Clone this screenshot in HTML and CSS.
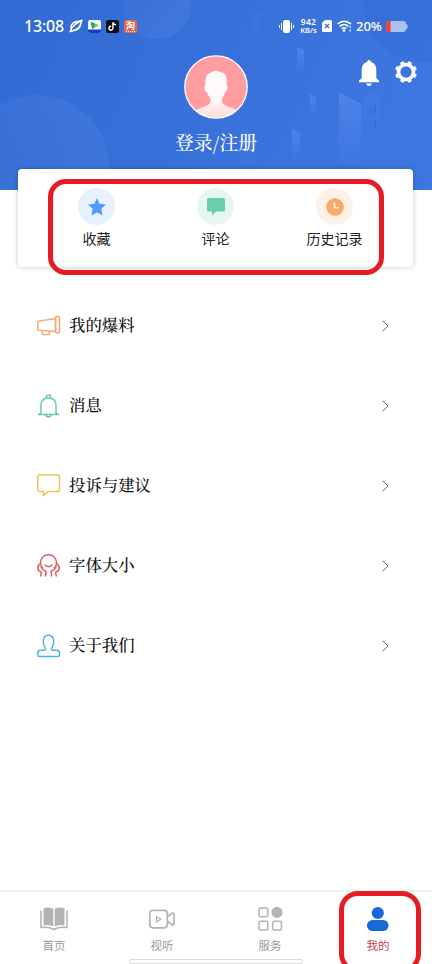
FILE: index.html
```
<!DOCTYPE html>
<html lang="zh-CN">
<head>
<meta charset="utf-8">
<title>我的</title>
<link rel="stylesheet" href="styles.css">
</head>
<body>
<div class="app">
  <header class="hero">
    <svg class="hero-art" viewBox="0 0 432 190">
      <defs>
        <linearGradient id="sky" x2="1" y2=".2"><stop stop-color="#326ad3"/><stop offset="1" stop-color="#3d76df"/></linearGradient>
        <linearGradient id="orb" x1="0" y1="1" x2="1" y2="0"><stop stop-color="#5b91ed" stop-opacity="0"/><stop offset="1" stop-color="#5b91ed" stop-opacity=".25"/></linearGradient>
        <linearGradient id="orb2" x2="1" y2="1"><stop stop-color="#5b91ed" stop-opacity="0"/><stop offset="1" stop-color="#5b91ed" stop-opacity=".32"/></linearGradient>
        <linearGradient id="tower" x2="0" y2="1"><stop stop-color="#5e92f4" stop-opacity=".55"/><stop offset="1" stop-color="#5e92f4" stop-opacity="0"/></linearGradient>
      </defs>
      <rect width="432" height="190" fill="url(#sky)"/>
      <circle cx="37" cy="167" r="72" fill="url(#orb)"/>
      <circle cx="157" cy="5" r="34" fill="url(#orb2)"/>
      <circle cx="424" cy="1" r="61" fill="#2861c9" opacity=".22"/>
      <g fill="url(#tower)">
        <path d="M339 92L361 104V165H339Z"/><path d="M361 104L371 91 380 95V150H361Z" opacity=".25"/>
        <path d="M292 128L300 133V159H292Z"/><path d="M297 47L304 50V74H297Z"/><path d="M310 94L316 97V118H310Z"/>
        <path d="M240 133L248 129 255 133V170H240Z" opacity=".3"/><path d="M253 13H260V42H253Z" opacity=".25"/>
      </g>
      <path d="M370 107v9m5-11v9m-5 8v9m5-11v9" stroke="#2861c9" opacity=".5"/>
    </svg>

    <div class="status">
      <div class="status-left">
        <span class="time">13:08</span>
        <svg width="14" height="14" viewBox="0 0 14 14" fill="none" stroke="#fff" stroke-width="1.5"><path d="M1.700 9Q2.500 2.500 9.500 2.200L12.800 1.500 11.700 5Q11 10.800 5 11.500L1.300 12.500 2.500 9.500Q6.500 4 12.800 1.500M4.500 11.500Q10 10 11.700 5"/></svg>
        <svg width="13" height="13" viewBox="0 0 13 13"><rect width="13" height="13" rx="2" fill="#f5faff"/><path d="M3 2L10.500 5.200 4 9Z" fill="#20ad63"/><path d="M3 2L7 3.800 3.500 6Z" fill="#1691e5"/><path d="M7 3.800L10.500 5.200 6 8Z" fill="#8bc34a"/><path d="M0 9.500H13V11Q13 13 11 13H2Q0 13 0 11Z" fill="#1739c4"/></svg>
        <svg width="13" height="13" viewBox="0 0 13 13"><rect width="13" height="13" rx="2.500" fill="#080b18"/><path d="M6.900 2.300V8.100A2 2 0 1 1 5.200 6.200M6.900 2.400Q7.500 4.700 10 4.800" stroke="#fff" stroke-width="1.400" fill="none"/></svg>
        <span class="shop"><b>淘</b><i></i></span>
      </div>
      <div class="status-right">
        <svg width="15" height="13" viewBox="0 0 15 13" fill="#fff"><rect x="4" width="7" height="13" rx="2"/><path d="M2 3h1v7H2zM0 5h1v3H0zM12 3h1v7h-1zM14 5h1v3h-1z"/></svg>
        <span class="rate"><b>942</b><b>KB/s</b></span>
        <svg class="sim" width="10" height="12" viewBox="0 0 10 12"><path d="M3 0H8.500Q10 0 10 1.500V10.500Q10 12 8.500 12H1.500Q0 12 0 10.500V3Z" fill="#fff"/><path d="M3 4L7 8M7 4L3 8" stroke="#3971da" stroke-width="1.300"/></svg>
        <svg class="wifi" width="15" height="12" viewBox="0 0 15 12" fill="none" stroke="#fff" stroke-width="1.600"><path d="M.5 4Q7-1.500 14 4M2.600 6.300Q7 2.700 11.400 6.300M4.600 8.600Q7 6.800 9.400 8.600"/><circle cx="7" cy="10.600" r=".6"/><path d="M13.200 6v2m0 1.500v2" stroke-width="1.200"/></svg>
        <span class="percent">20%</span>
        <svg width="22" height="11" viewBox="0 0 22 11"><rect width="20" height="11" rx="3" fill="#a9c1ee"/><path d="M4.500 0H3Q0 0 0 3V8Q0 11 3 11H4.500Z" fill="#f03e3b"/><rect x="20" y="3" width="1.500" height="5" rx=".7" fill="#a9c1ee"/></svg>
      </div>
    </div>

    <div class="actions">
      <svg width="22" height="27" viewBox="0 0 22 27" fill="#fff"><path d="M11 0Q12.700 0 13 2Q18.300 3.600 18.300 10V17.500Q18.300 19 21 20.500V22.300H1V20.500Q3.700 19 3.700 17.500V10Q3.700 3.600 9 2Q9.300 0 11 0ZM8 23.500H14Q13 26 11 26Q9 26 8 23.500Z"/></svg>
      <svg width="24" height="24" viewBox="-12 -12 24 24"><g fill="#fff"><circle r="9.300"/><rect x="-2" y="-11" width="4" height="22" rx="1" transform="rotate(22.500)"/><rect x="-2" y="-11" width="4" height="22" rx="1" transform="rotate(67.500)"/><rect x="-2" y="-11" width="4" height="22" rx="1" transform="rotate(112.500)"/><rect x="-2" y="-11" width="4" height="22" rx="1" transform="rotate(157.500)"/></g><circle r="5.700" fill="#3d74dd"/></svg>
    </div>

    <div class="profile">
      <svg width="64" height="64" viewBox="0 0 64 64">
        <defs><clipPath id="face"><circle cx="32" cy="32" r="31"/></clipPath><linearGradient id="bust" x2="0" y2="1"><stop offset=".6" stop-color="#fffafa"/><stop offset="1" stop-color="#ffd5d6"/></linearGradient></defs>
        <circle cx="32" cy="32" r="31" fill="#ff9da1"/>
        <path clip-path="url(#face)" d="M27 17.500Q31 14.500 36 17Q42 17.500 42.500 23Q43 26 42.500 30Q44 30 43.300 34Q42.500 37 41 37.500Q40 41 38 43.500V47Q39 50 45 52Q52 54 54 57V64H10V57Q13 54 19 52Q26 50 26.500 47V43.500Q24.500 41 23 37.500Q21 37 20.500 33Q20.300 30 21.500 30Q20 20 27 17.500Z" fill="url(#bust)"/>
        <circle cx="32" cy="32" r="31.200" fill="none" stroke="#fff" stroke-width="1.300"/>
      </svg>
      <span class="login">登录/注册</span>
    </div>
  </header>

  <section class="shortcuts">
    <div class="shortcut"><span class="disc blue"><svg width="18" height="18" viewBox="0 0 18 18"><path d="M9 0L11.600 5.800 18 6.500 13.300 10.800 14.600 17.500 9 14.400 3.400 17.500 4.700 10.800 0 6.500 6.400 5.800Z" fill="#529df7"/></svg></span><span>收藏</span></div>
    <div class="shortcut"><span class="disc green"><svg width="18" height="18" viewBox="0 0 18 18"><path d="M1.500 0H16.500Q18 0 18 1.500V12Q18 13.500 16.500 13.500H9L5 17.500V13.500H1.500Q0 13.500 0 12V1.500Q0 0 1.500 0Z" fill="#68cfaa"/></svg></span><span>评论</span></div>
    <div class="shortcut"><span class="disc orange"><svg width="18" height="18" viewBox="0 0 18 18"><circle cx="9" cy="9" r="8.700" fill="#fca867"/><path d="M8.500 4.500V9.800H13" fill="none" stroke="#fff1e5" stroke-width="1.500"/></svg></span><span>历史记录</span></div>
    <div class="mark mark-top"></div>
  </section>

  <main class="menu">
    <div class="row"><svg class="menu-icon" viewBox="0 0 24 24" stroke="#f5aa76"><path d="M1.500 7.300L18.500 4.500V17.500L1.500 16.200Q.8 16.100.8 15.200V8.300Q.8 7.400 1.500 7.300Z"/><rect x="18.500" y="2.500" width="4" height="16.500" rx="1.500"/><path d="M5.500 16.700V19.500Q5.500 20.500 6.500 20.500H11.500Q12.500 20.500 12.500 19.500V17.200"/></svg><span>我的爆料</span><svg class="arrow" viewBox="0 0 7 12"><path d="M.7.700L6 6 .7 11.300"/></svg></div>
    <div class="row"><svg class="menu-icon" viewBox="0 0 24 24" stroke="#68cca8"><path d="M4 19V11.500Q4 4 11.500 4Q19 4 19 11.500V19M1 20.500Q4 20.500 4 18M22 20.500Q19 20.500 19 18M1 20.500H22M9.500 4V2Q9.500 1.300 10.200 1.300H12.800Q13.500 1.300 13.500 2V4M9 20.500Q9 23 11.500 23Q14 23 14 20.500"/></svg><span>消息</span><svg class="arrow" viewBox="0 0 7 12"><path d="M.7.700L6 6 .7 11.300"/></svg></div>
    <div class="row"><svg class="menu-icon" viewBox="0 0 24 24" stroke="#f3c455"><path d="M2.500 1H20.500Q22.500 1 22.500 3V15.500Q22.500 17.500 20.500 17.500H11L6.500 21.800V17.500H2.500Q.8 17.500.8 15.500V3Q.8 1 2.500 1Z"/></svg><span>投诉与建议</span><svg class="arrow" viewBox="0 0 7 12"><path d="M.7.700L6 6 .7 11.300"/></svg></div>
    <div class="row"><svg class="menu-icon" viewBox="0 0 24 24" stroke="#e45b65"><path d="M6 14.500A8 8 0 1 1 17 14.500M7.800 10.500Q9 12.700 11.500 12.700Q14 12.700 15.200 10.500M3.700 9.500Q.8 11 .8 14Q.8 17 4.200 18.200Q4.500 20 3.500 22.500M3.700 12.500Q5 15.800 8.500 17Q9.700 18 8.500 20V22.500M19.300 9.500Q22.200 11 22.200 14Q22.200 17 18.800 18.200Q18.500 20 19.500 22.500M19.300 12.500Q18 15.800 14.500 17Q13.300 18 14.500 20V22.500"/></svg><span>字体大小</span><svg class="arrow" viewBox="0 0 7 12"><path d="M.7.700L6 6 .7 11.300"/></svg></div>
    <div class="row"><svg class="menu-icon" viewBox="0 0 24 24" stroke="#4fb3ea"><path d="M8.500 14.500Q6.200 11 6.200 7.500Q6.200 1.200 11.500 1.200Q16.800 1.200 16.800 7.500Q16.800 11 14.500 14.500Q14 16.200 17 16.300H20Q22.500 16.500 22.500 19.500V21Q22.500 22.500 21 22.500H2.300Q.8 22.500.8 21V19.500Q.8 16.500 3.200 16.300H6Q9 16.200 8.500 14.500Z"/></svg><span>关于我们</span><svg class="arrow" viewBox="0 0 7 12"><path d="M.7.700L6 6 .7 11.300"/></svg></div>
  </main>

  <nav class="tabs">
    <div class="tab"><svg viewBox="0 0 28 26"><path d="M3.500 2.500Q9 .5 13.300 3V20.500Q9 18 3.500 19.500ZM14.700 3Q19 .5 24.500 2.500V19.500Q19 18 14.700 20.500Z" fill="#b3b3b3"/><path d="M1 4.500V21.500Q9 20.300 14 23.500Q19 20.300 27 21.500V4.500" fill="none" stroke="#b3b3b3" stroke-width="1.500"/></svg><span>首页</span></div>
    <div class="tab"><svg viewBox="0 0 28 26" fill="none" stroke="#b3b3b3" stroke-width="1.700"><rect x="1.800" y="4.300" width="17.500" height="17.500" rx="3"/><path d="M19.500 10.500L24 7.300Q26 6.500 26 8.500V17.500Q26 19.500 24 18.700L19.500 15.500"/><path d="M8.500 10.500L12.800 13.200 8.500 16Z" stroke-width="1.200"/></svg><span>视听</span></div>
    <div class="tab"><svg viewBox="0 0 28 26" fill="none" stroke="#b3b3b3" stroke-width="1.500"><rect x="3" y="2" width="8.800" height="8.800" rx="1.500"/><circle cx="21" cy="6.400" r="4.800" fill="#b3b3b3"/><rect x="3" y="15.200" width="8.800" height="8.800" rx="1.500"/><rect x="16.700" y="15.200" width="8.800" height="8.800" rx="1.500"/></svg><span>服务</span></div>
    <div class="tab active"><svg viewBox="0 0 28 26" fill="#176bd8"><circle cx="13.800" cy="7" r="6.100"/><rect x="3" y="14" width="21.500" height="11" rx="5.500"/></svg><span>我的</span></div>
    <div class="home-bar"></div>
    <div class="mark mark-tab"></div>
  </nav>
</div>
</body>
</html>
```
FILE: styles.css
```
* { box-sizing: border-box; }
body { margin: 0; background: #fff; font-family: "Noto Sans CJK SC", sans-serif; }
svg { display: block; flex: none; }
.app { position: relative; width: 432px; height: 964px; overflow: hidden; display: flex; flex-direction: column; }
.hero { position: relative; height: 190px; flex: none; color: #fff; }
.hero-art { position: absolute; inset: 0; width: 432px; height: 190px; }
.status { position: relative; display: flex; justify-content: space-between; height: 52px; padding: 0 24px; align-items: center; font-family: "Noto Sans", sans-serif; }
.status-left, .status-right { display: flex; align-items: center; }
.status-left { gap: 5px; }
.time { font-size: 16px; line-height: 20px; font-weight: 500; width: 40px; letter-spacing: -.2px; white-space: nowrap; }
.shop { width: 13px; height: 13px; border-radius: 2px; background: #e96543; text-align: center; }
.shop b { display: block; font: 700 9px/11px "Noto Sans CJK SC", sans-serif; }
.shop i { display: block; width: 9px; border-top: 1px dotted #fff; margin: 0 auto; }
.rate { display: flex; flex-direction: column; width: 19px; margin-left: 5px; font-size: 8.500px; line-height: 9px; align-items: center; letter-spacing: .3px; }
.rate b { font-weight: 600; }
.rate b:last-child { font-size: 7.500px; letter-spacing: 0; }
.sim { margin-left: 4px; }
.wifi { margin-left: 5px; }
.percent { margin: 0 3px 0 4px; font-size: 13px; line-height: 20px; font-weight: 500; width: 27px; letter-spacing: 0; }
.actions { position: absolute; right: 14px; top: 60px; display: flex; align-items: center; gap: 14px; }
.actions svg:last-child { margin-top: -3px; }
.profile { position: relative; display: flex; flex-direction: column; align-items: center; margin-top: 3px; }
.login { margin-top: 9px; font: 500 18.800px/28px "Noto Serif CJK SC", "Noto Serif SC", "Noto Sans CJK SC", serif; }
.shortcuts { position: relative; flex: none; width: 395px; height: 98px; margin: -21px 0 0 18px; padding: 19px 19px 0; display: grid; grid-template-columns: repeat(3, 1fr); background: #fff; border-radius: 4px; box-shadow: 0 0 5px rgba(0,0,0,.24); }
.shortcut { display: flex; flex-direction: column; align-items: center; color: #222; font-size: 14px; line-height: 22px; gap: 2px; }
.disc { width: 37px; height: 37px; border-radius: 50%; display: flex; align-items: center; justify-content: center; }
.blue { background: #e6f1fe; }
.green { background: #e6f7f1; }
.orange { background: #fff1e6; }
.mark { position: absolute; border: 5px solid #e51c23; pointer-events: none; }
.mark-top { left: 30px; top: 10px; width: 336px; height: 96px; border-radius: 18px; }
.menu { padding-top: 19px; }
.row { height: 80px; padding: 0 43px 0 37px; display: flex; align-items: center; font: 500 16.400px/24px "Noto Serif CJK SC", "Noto Serif SC", "Noto Sans CJK SC", serif; color: #111; }
.row span { margin: -4px 0 0 8px; }
.menu-icon { width: 24px; height: 24px; fill: none; stroke-width: 1.500; stroke-linejoin: round; }
.arrow { width: 7px; height: 12px; margin-left: auto; fill: none; stroke: #666; stroke-width: 1; }
.tabs { position: relative; margin-top: auto; height: 74px; flex: none; border-top: 2px solid #eee; display: grid; grid-template-columns: repeat(4, 1fr); background: #fff; }
.tab { display: flex; flex-direction: column; align-items: center; padding-top: 14px; color: #9299a3; font-size: 11.500px; line-height: 18px; gap: 4px; }
.tab svg { width: 28px; height: 26px; }
.active { color: #d3424a; }
.home-bar { position: absolute; left: 129px; bottom: 0; width: 174px; height: 5px; background: #fff; border: 1px solid #ddd; border-radius: 2px; }
.mark-tab { left: 339px; top: -1px; width: 82px; height: 82px; border-radius: 19px; }
```
